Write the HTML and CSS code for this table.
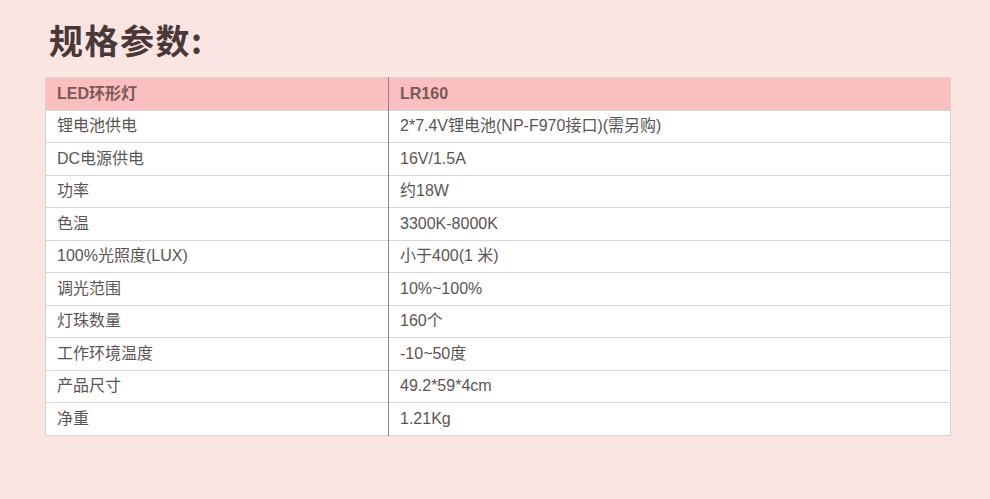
FILE: index.html
```html
<!DOCTYPE html>
<html lang="zh">
<head>
<meta charset="utf-8">
<link rel="stylesheet" href="styles.css">
</head>
<body>
<div class="page">
  <h1 class="title">规格参数:</h1>
  <table class="spec">
    <thead>
      <tr><th class="c1">LED环形灯</th><th>LR160</th></tr>
    </thead>
    <tbody>
      <tr><td class="c1">锂电池供电</td><td>2*7.4V锂电池(NP-F970接口)(需另购)</td></tr>
      <tr><td class="c1">DC电源供电</td><td>16V/1.5A</td></tr>
      <tr><td class="c1">功率</td><td>约18W</td></tr>
      <tr><td class="c1">色温</td><td>3300K-8000K</td></tr>
      <tr><td class="c1">100%光照度(LUX)</td><td>小于400(1 米)</td></tr>
      <tr><td class="c1">调光范围</td><td>10%~100%</td></tr>
      <tr><td class="c1">灯珠数量</td><td>160个</td></tr>
      <tr><td class="c1">工作环境温度</td><td>-10~50度</td></tr>
      <tr><td class="c1">产品尺寸</td><td>49.2*59*4cm</td></tr>
      <tr><td class="c1">净重</td><td>1.21Kg</td></tr>
    </tbody>
  </table>
</div>
</body>
</html>
```
FILE: styles.css
```css
html, body {
  margin: 0;
  padding: 0;
}
body {
  width: 990px;
  height: 499px;
  overflow: hidden;
  background: #fbe5e3;
  font-family: "Noto Sans CJK SC", "Noto Sans", sans-serif;
}
.page {
  padding: 15px 0 0 45px;
}
.title {
  margin: 0 0 12px 4px;
  font-size: 34px;
  line-height: 50px;
  font-weight: 700;
  color: #483838;
  letter-spacing: 1.5px;
}
.spec {
  width: 906px;
  border-collapse: collapse;
  background: #fff;
  border: 1px solid #d6d2d2;
  color: #5a5555;
  font-family: "Liberation Sans", "Noto Sans CJK SC", sans-serif;
  font-size: 16px;
}
.spec th, .spec td {
  height: 31.5px;
  padding: 0 0 0 11px;
  text-align: left;
  border-top: 1px solid #d9d6d6;
  line-height: 20px;
}
.spec th {
  background: #fcbfbf;
  color: #7a5858;
  font-weight: 700;
  border-top: none;
}
.spec .c1 {
  width: 331px;
  border-right: 1px solid #8c8686;
}
```
